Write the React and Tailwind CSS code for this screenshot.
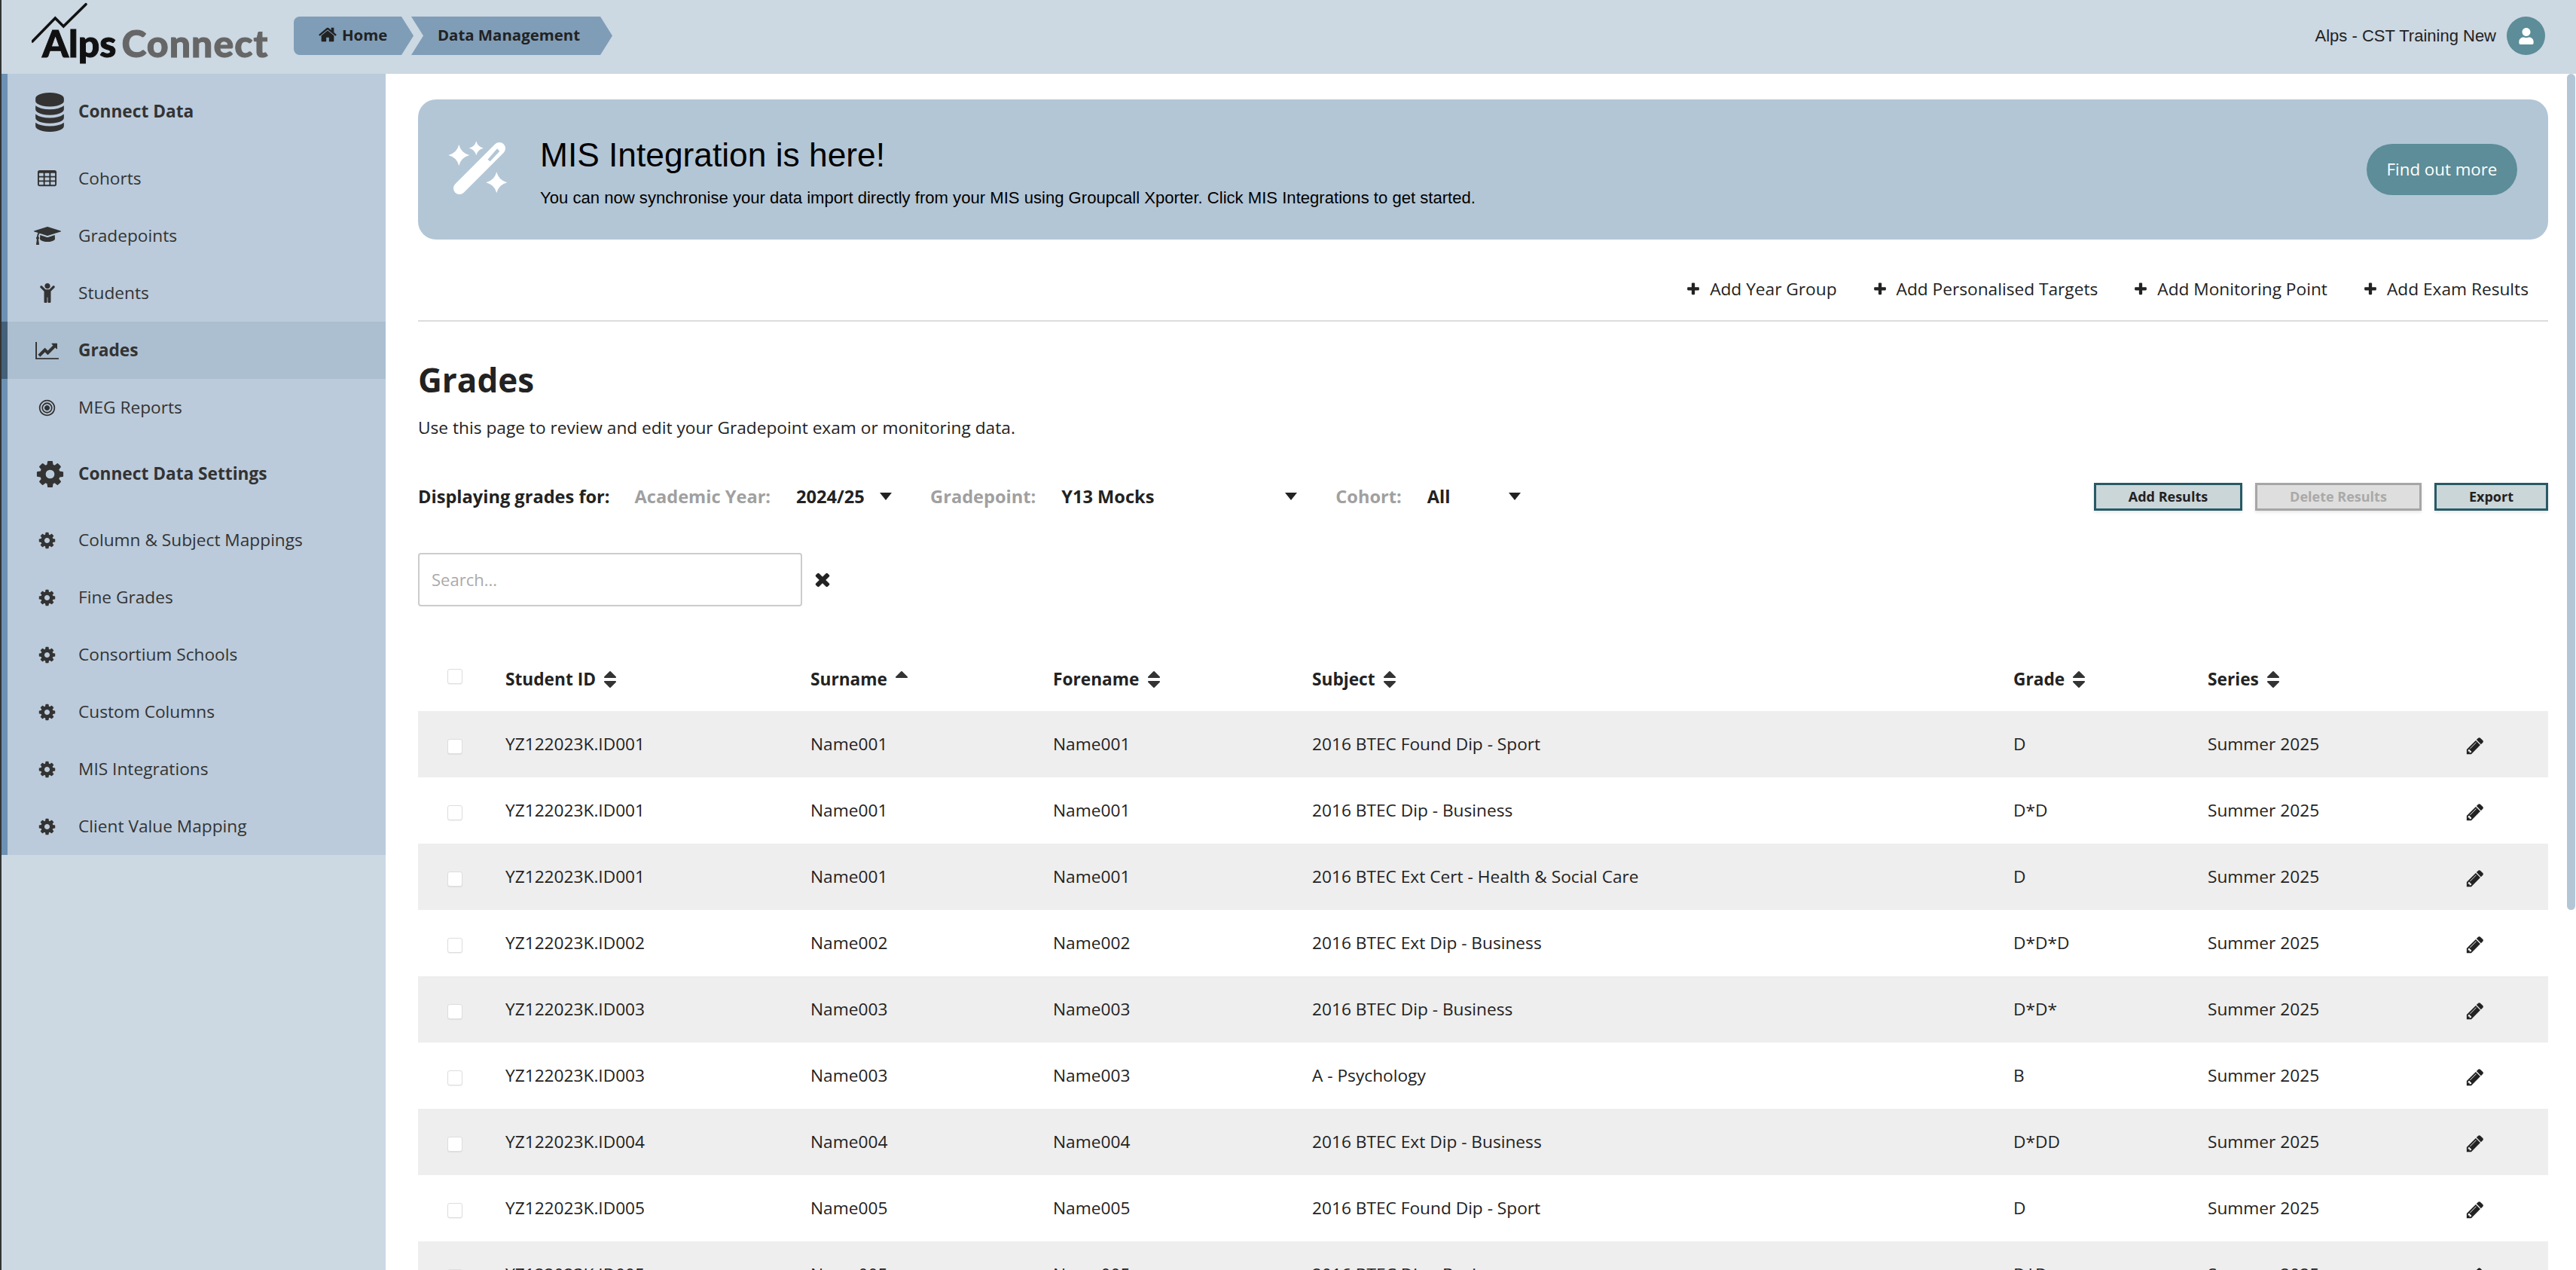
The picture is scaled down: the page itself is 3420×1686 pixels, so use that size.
import React from "react";
import { FaChild, FaUser } from "react-icons/fa";

const P = {
  cog: ["0 0 1792 1792", "M1152 896q0-106-75-181t-181-75-181 75-75 181 75 181 181 75 181-75 75-181zm512-109v222q0 12-8 23t-20 13l-185 28q-19 54-39 91 35 50 107 138 10 12 10 25t-9 23q-27 37-99 108t-94 71q-12 0-26-9l-138-108q-44 23-91 38-16 136-29 186-7 28-36 28h-222q-14 0-24.5-8.5t-11.5-21.5l-28-184q-49-16-90-37l-141 107q-10 9-25 9-14 0-25-11-126-114-165-168-7-10-7-23 0-12 8-23 15-21 51-66.5t54-70.5q-27-50-41-99l-183-27q-13-2-21-12.5t-8-23.5v-222q0-12 8-23t19-13l186-28q14-46 39-92-40-57-107-138-10-12-10-24 0-10 9-23 26-36 98.5-107.5t94.5-71.5q13 0 26 10l138 107q44-23 91-38 16-136 29-186 7-28 36-28h222q14 0 24.5 8.5t11.5 21.5l28 184q49 16 90 37l142-107q9-9 24-9 13 0 25 10 129 119 165 170 7 8 7 22 0 12-8 23-15 21-51 66.5t-54 70.5q26 50 41 98l183 28q13 2 21 12.5t8 23.5z"],
  pencil: ["0 0 1792 1792", "M491 1536l91-91-235-235-91 91v107h128v128h107zm523-928q0-22-22-22-10 0-17 7l-542 542q-7 7-7 17 0 22 22 22 10 0 17-7l542-542q7-7 7-17zm-54-192l416 416-832 832h-416v-416zm683 96q0 53-37 90l-166 166-416-416 166-165q36-38 90-38 53 0 91 38l235 234q37 39 37 91z"],
  home: ["0 0 1792 1792", "M1472 992v480q0 26-19 45t-45 19h-384v-384h-256v384h-384q-26 0-45-19t-19-45v-480q0-1 .5-3t.5-3l575-474 575 474q1 2 1 6zm223-69l-62 74q-8 9-21 11h-3q-13 0-21-7l-692-577-692 577q-12 8-24 7-13-2-21-11l-62-74q-8-10-7-23.5t11-21.5l719-599q32-26 76-26t76 26l244 204v-195q0-14 9-23t23-9h192q14 0 23 9t9 23v408l219 182q10 8 11 21.5t-7 23.5z"],
  database: ["0 0 1792 1792", "M896 768q237 0 443-43t325-127v170q0 69-103 128t-280 93.5-385 34.5-385-34.5-280-93.5-103-128v-170q119 84 325 127t443 43zm0 768q237 0 443-43t325-127v170q0 69-103 128t-280 93.5-385 34.5-385-34.5-280-93.5-103-128v-170q119 84 325 127t443 43zm0-384q237 0 443-43t325-127v170q0 69-103 128t-280 93.5-385 34.5-385-34.5-280-93.5-103-128v-170q119 84 325 127t443 43zm0-1152q208 0 385 34.5t280 93.5 103 128v128q0 69-103 128t-280 93.5-385 34.5-385-34.5-280-93.5-103-128v-128q0-69 103-128t280-93.5 385-34.5z"],
  plus: ["0 0 1792 1792", "M1600 736v192q0 40-28 68t-68 28h-416v416q0 40-28 68t-68 28h-192q-40 0-68-28t-28-68v-416h-416q-40 0-68-28t-28-68v-192q0-40 28-68t68-28h416v-416q0-40 28-68t68-28h192q40 0 68 28t28 68v416h416q40 0 68 28t28 68z"],
  times: ["0 0 1792 1792", "M1490 1322q0 40-28 68l-136 136q-28 28-68 28t-68-28l-294-294-294 294q-28 28-68 28t-68-28l-136-136q-28-28-28-68t28-68l294-294-294-294q-28-28-28-68t28-68l136-136q28-28 68-28t68 28l294 294 294-294q28-28 68-28t68 28l136 136q28 28 28 68t-28 68l-294 294 294 294q28 28 28 68z"],
  sort: ["0 0 1792 1792", "M1408 1088q0 26-19 45l-448 448q-19 19-45 19t-45-19l-448-448q-19-19-19-45t19-45 45-19h896q26 0 45 19t19 45zm0-384q0 26-19 45t-45 19h-896q-26 0-45-19t-19-45 19-45l448-448q19-19 45-19t45 19l448 448q19 19 19 45z"],
  sortUp: ["0 0 1792 1792", "M1408 704q0 26-19 45t-45 19h-896q-26 0-45-19t-19-45 19-45l448-448q19-19 45-19t45 19l448 448q19 19 19 45z"],
  table: ["0 0 1792 1792", "M576 1376v-192q0-14-9-23t-23-9h-320q-14 0-23 9t-9 23v192q0 14 9 23t23 9h320q14 0 23-9t9-23zm0-384v-192q0-14-9-23t-23-9h-320q-14 0-23 9t-9 23v192q0 14 9 23t23 9h320q14 0 23-9t9-23zm512 384v-192q0-14-9-23t-23-9h-320q-14 0-23 9t-9 23v192q0 14 9 23t23 9h320q14 0 23-9t9-23zm-512-768v-192q0-14-9-23t-23-9h-320q-14 0-23 9t-9 23v192q0 14 9 23t23 9h320q14 0 23-9t9-23zm512 384v-192q0-14-9-23t-23-9h-320q-14 0-23 9t-9 23v192q0 14 9 23t23 9h320q14 0 23-9t9-23zm512 384v-192q0-14-9-23t-23-9h-320q-14 0-23 9t-9 23v192q0 14 9 23t23 9h320q14 0 23-9t9-23zm-512-768v-192q0-14-9-23t-23-9h-320q-14 0-23 9t-9 23v192q0 14 9 23t23 9h320q14 0 23-9t9-23zm512 384v-192q0-14-9-23t-23-9h-320q-14 0-23 9t-9 23v192q0 14 9 23t23 9h320q14 0 23-9t9-23zm0-384v-192q0-14-9-23t-23-9h-320q-14 0-23 9t-9 23v192q0 14 9 23t23 9h320q14 0 23-9t9-23zm128-320v1088q0 66-47 113t-113 47h-1344q-66 0-113-47t-47-113v-1088q0-66 47-113t113-47h1344q66 0 113 47t47 113z"],
  cap: ["0 0 2304 1792", "M1774 836l18 316q4 69-82 128t-235 93.5-323 34.5-323-34.5-235-93.5-82-128l18-316 574 181q22 7 48 7t48-7zm530-324q0 23-22 31l-1120 352q-4 1-10 1t-10-1l-652-206q-43 34-71 111.5t-34 178.5q63 36 63 109 0 69-58 107l58 433q2 14-8 25-9 11-24 11h-192q-15 0-24-11-10-11-8-25l58-433q-58-38-58-107 0-73 65-111 11-207 98-330l-333-104q-22-8-22-31t22-31l1120-352q4-1 10-1t10 1l1120 352q22 8 22 31z"],
  chart: ["0 0 2048 1792", "M2048 1536v128h-2048v-1536h128v1408h1920zm-128-1248v435q0 21-19.5 29.5t-35.5-7.5l-121-121-633 633q-10 10-23 10t-23-10l-233-233-416 416-192-192 585-585q10-10 23-10t23 10l233 233 464-464-121-121q-16-16-7.5-35.5t29.5-19.5h435q14 0 23 9t9 23z"],
  bullseye: ["0 0 1792 1792", "M1152 896q0 106-75 181t-181 75-181-75-75-181 75-181 181-75 181 75 75 181zm128 0q0-159-112.5-271.5t-271.5-112.5-271.5 112.5-112.5 271.5 112.5 271.5 271.5 112.5 271.5-112.5 112.5-271.5zm128 0q0 212-150 362t-362 150-362-150-150-362 150-362 362-150 362 150 150 362zm128 0q0-130-51-248.5t-136.5-204-204-136.5-248.5-51-248.5 51-204 136.5-136.5 204-51 248.5 51 248.5 136.5 204 204 136.5 248.5 51 248.5-51 204-136.5 136.5-204 51-248.5zm128 0q0 209-103 385.5t-279.5 279.5-385.5 103-385.5-103-279.5-279.5-103-385.5 103-385.5 279.5-279.5 385.5-103 385.5 103 279.5 279.5 103 385.5z"],
};

function Ic({ n, className, stretch }) {
  const [vb, d] = P[n];
  return (
    <svg viewBox={vb} fill="currentColor" className={className} preserveAspectRatio={stretch ? "none" : undefined}>
      <path d={d} />
    </svg>
  );
}

function star(cx, cy, r) {
  const k = 0.2 * r;
  return `M${cx} ${cy - r}Q${cx + k} ${cy - k} ${cx + r} ${cy}Q${cx + k} ${cy + k} ${cx} ${cy + r}Q${cx - k} ${cy + k} ${cx - r} ${cy}Q${cx - k} ${cy - k} ${cx} ${cy - r}Z`;
}

const OPEN = "font-['Open_Sans',sans-serif]";
const LIB = "font-['Liberation_Sans',Arial,sans-serif]";

const dataItems = [
  ["table", "Cohorts"],
  ["cap", "Gradepoints"],
  ["child", "Students"],
  ["chart", "Grades"],
  ["bullseye", "MEG Reports"],
];
const settingsItems = ["Column & Subject Mappings", "Fine Grades", "Consortium Schools", "Custom Columns", "MIS Integrations", "Client Value Mapping"];

const rows = [
  ["YZ122023K.ID001", "Name001", "Name001", "2016 BTEC Found Dip - Sport", "D"],
  ["YZ122023K.ID001", "Name001", "Name001", "2016 BTEC Dip - Business", "D*D"],
  ["YZ122023K.ID001", "Name001", "Name001", "2016 BTEC Ext Cert - Health & Social Care", "D"],
  ["YZ122023K.ID002", "Name002", "Name002", "2016 BTEC Ext Dip - Business", "D*D*D"],
  ["YZ122023K.ID003", "Name003", "Name003", "2016 BTEC Dip - Business", "D*D*"],
  ["YZ122023K.ID003", "Name003", "Name003", "A - Psychology", "B"],
  ["YZ122023K.ID004", "Name004", "Name004", "2016 BTEC Ext Dip - Business", "D*DD"],
  ["YZ122023K.ID005", "Name005", "Name005", "2016 BTEC Found Dip - Sport", "D"],
  ["YZ122023K.ID005", "Name005", "Name005", "2016 BTEC Dip - Business", "D*D"],
];

function SideIcon({ n }) {
  if (n === "child") return <FaChild className="w-[20px] h-[26px]" />;
  if (n === "chart") return <Ic n="chart" className="w-[31px] h-[27px]" />;
  if (n === "cap") return <Ic n="cap" className="w-[36px] h-[28px]" />;
  if (n === "table") return <Ic n="table" className="w-[27px] h-[27px]" />;
  return <Ic n={n} className="w-[25px] h-[25px]" />;
}

function SideRow({ icon, label, active }) {
  return (
    <div className={`h-[76px] flex items-center border-l-[8px] ${active ? "bg-[#acbfd1] border-[#45617a] font-bold" : "border-[#6d91b3]"}`}>
      <div className="w-[94px] pl-[23px] pr-[12px] flex justify-center shrink-0 text-[#333333]">{icon}</div>
      <span>{label}</span>
    </div>
  );
}

function Head({ label, sort = "sort", w }) {
  return (
    <div className={`${w} flex items-center gap-[5px]`}>
      <span>{label}</span>
      <Ic n={sort} className="w-[28px] h-[28px] text-[#333333]" />
    </div>
  );
}

function Filter({ label, value, w }) {
  return (
    <div className="flex items-center">
      <span className="text-[#a0a0a0] mr-[34px]">{label}</span>
      <div className={`${w} flex items-center justify-between`}>
        <span className="text-[#222222]">{value}</span>
        <span className="w-0 h-0 border-x-[8px] border-x-transparent border-t-[10px] border-t-[#222222]" />
      </div>
    </div>
  );
}

function Check() {
  return <span className="block w-[20px] h-[20px] rounded-[3px] bg-white border border-[#dddddd] shadow-[0_1px_1px_rgba(0,0,0,0.06)]" />;
}

export default function App() {
  return (
    <div className={`h-[1686px] w-[3420px] overflow-hidden flex flex-col bg-[#ccd8e2] ${OPEN} text-[#222222]`}>
      <header className="h-[98px] shrink-0 flex items-start justify-between border-l-2 border-[#333333] bg-[#ccd8e2]">
        <div className="flex items-start">
          <div className="relative w-[348px] h-[98px] ml-[40px]">
            <svg viewBox="0 0 80 60" fill="none" className="absolute left-0 top-[2px] w-[80px] h-[60px]">
              <path d="M1 53 L31.300 22 L42.300 33 L72 3.700" stroke="#111111" strokeWidth="3.500" strokeLinecap="round" />
            </svg>
            <div className="absolute left-[14px] top-[27px] flex items-baseline font-['Lato',sans-serif] font-black text-[50px] leading-[60px] whitespace-nowrap [-webkit-text-stroke:1px_currentColor]">
              <span className="text-[#111111]">Alps</span>
              <span className="text-[#666666] ml-[7px] tracking-[1px]">Connect</span>
            </div>
          </div>
          <nav className="flex items-center mt-[22px] h-[51px] text-[20.4px] font-bold text-[#222222]">
            <div className="h-[51px] w-[159px] bg-[#7f9db7] rounded-l-[8px] flex items-center pb-[3px] pl-[32px] gap-[6px] [clip-path:polygon(0_0,143px_0,159px_50%,143px_100%,0_100%)]">
              <Ic n="home" className="w-[26px] h-[26px] text-[#222222]" />
              <span>Home</span>
            </div>
            <div className="h-[51px] w-[267px] -ml-[3px] bg-[#7f9db7] flex items-center pb-[3px] pl-[35px] [clip-path:polygon(0_0,251px_0,267px_50%,251px_100%,0_100%,16px_50%)]">
              Data Management
            </div>
          </nav>
        </div>
        <div className="flex items-center mt-[22px] pr-[41px] gap-[14px]">
          <span className={`${LIB} text-[22px] text-[#222222]`}>Alps - CST Training New</span>
          <div className="w-[51px] h-[51px] rounded-full bg-[#5c8d98] flex items-center justify-center text-white">
            <FaUser className="w-[22px] h-[22px]" />
          </div>
        </div>
      </header>

      <div className="flex-1 flex min-h-0">
        <aside className="w-[512px] shrink-0 border-l-2 border-[#333333] bg-[#ccd8e2] text-[22.7px] text-[#333333]">
          <div className="bg-[#bbcbdb] h-[1037px]">
            <div className="h-[101px] flex items-center border-l-[8px] border-[#6d91b3] font-bold">
              <div className="w-[94px] pl-[30px] pr-[12px] flex justify-center shrink-0"><Ic n="database" stretch className="w-[44px] h-[52px]" /></div>
              <span>Connect Data</span>
            </div>
            {dataItems.map(([n, l]) => (
              <SideRow key={l} icon={<SideIcon n={n} />} label={l} active={l === "Grades"} />
            ))}
            <div className="h-[100px] flex items-center border-l-[8px] border-[#6d91b3] font-bold">
              <div className="w-[94px] pl-[30px] pr-[12px] flex justify-center shrink-0"><Ic n="cog" className="w-[41px] h-[41px]" /></div>
              <span>Connect Data Settings</span>
            </div>
            {settingsItems.map((l) => (
              <SideRow key={l} icon={<Ic n="cog" className="w-[25px] h-[25px]" />} label={l} />
            ))}
          </div>
        </aside>

        <main className="flex-1 min-w-0 flex bg-white">
          <div className="w-[2896px] pl-[43px] pr-[25px] shrink-0">
            <section className="mt-[34px] h-[186px] rounded-[24px] bg-[#b3c6d6] flex items-center justify-between pl-[40px] pr-[41px]">
              <div className="flex items-center">
                <svg viewBox="15 17 80 76" fill="#ffffff" className="w-[80px] h-[76px]">
                  <path d="M83 27 L30 80" stroke="#ffffff" strokeWidth="16" strokeLinecap="round" />
                  <path d="M67.500 41.700 L80 27.300 L83.300 30.700 L70.700 44.300 Z" fill="#b3c6d6" />
                  <path d={star(29.3, 36, 14)} />
                  <path d={star(52.3, 26.7, 9.5)} />
                  <path d={star(79.3, 72.3, 14)} />
                </svg>
                <div className={`${LIB} ml-[42px] mt-[5px] text-black`}>
                  <div className="text-[44.3px] leading-[54px]">MIS Integration is here!</div>
                  <div className="text-[22.1px] leading-[28px] mt-[16px]">You can now synchronise your data import directly from your MIS using Groupcall Xporter. Click MIS Integrations to get started.</div>
                </div>
              </div>
              <div className="w-[200px] h-[68px] rounded-full bg-[#5c8d98] text-white text-[22.3px] flex items-center justify-center">Find out more</div>
            </section>

            <div className="h-[109px] border-b-[2px] border-[#dddddd] flex items-end justify-end pb-[23px] pr-[26px] gap-[47px] text-[22.7px] text-[#222222]">
              {["Add Year Group", "Add Personalised Targets", "Add Monitoring Point", "Add Exam Results"].map((t) => (
                <div key={t} className="flex items-center gap-[12px] leading-[36px]">
                  <Ic n="plus" className="w-[20px] h-[20px]" />
                  <span>{t}</span>
                </div>
              ))}
            </div>

            <h1 className="mt-[49px] text-[44px] leading-[56px] font-bold text-[#222222]">Grades</h1>
            <p className="mt-[20px] text-[22.7px] leading-[32px] text-[#222222]">Use this page to review and edit your Gradepoint exam or monitoring data.</p>

            <div className="mt-[57px] h-[37px] flex items-center justify-between text-[23.6px] font-bold">
              <div className="flex items-center">
                <span className="mr-[33px] text-[#222222]">Displaying grades for:</span>
                <div className="flex items-center gap-[51px]">
                  <Filter label="Academic Year:" value="2024/25" w="w-[127px]" />
                  <Filter label="Gradepoint:" value="Y13 Mocks" w="w-[313px]" />
                  <Filter label="Cohort:" value="All" w="w-[124px]" />
                </div>
              </div>
              <div className="flex items-center gap-[17px] text-[18px]">
                <div className="w-[197px] h-[37px] border-[3px] border-[#265a66] bg-[#cbd6d9] flex items-center justify-center shadow-[0_2px_4px_rgba(0,0,0,0.1)]">Add Results</div>
                <div className="w-[221px] h-[37px] border-[3px] border-[#a6a6a6] bg-[#dedede] text-[#a9a9a9] flex items-center justify-center shadow-[0_2px_4px_rgba(0,0,0,0.1)]">Delete Results</div>
                <div className="w-[151px] h-[37px] border-[3px] border-[#265a66] bg-[#cbd6d9] flex items-center justify-center shadow-[0_2px_4px_rgba(0,0,0,0.1)]">Export</div>
              </div>
            </div>

            <div className="mt-[56px] flex items-center">
              <div className="w-[510px] h-[71px] border-2 border-[#cccccc] rounded-[4px] pl-[16px] flex items-center text-[22px] text-[#aaaaaa]">Search...</div>
              <Ic n="times" className="ml-[13px] w-[28px] h-[28px] text-[#222222] -mt-[2px]" />
            </div>

            <div className="mt-[59px] h-[80px] pb-[4px] flex items-center text-[22.7px] font-bold text-[#222222]">
              <div className="w-[116px] pl-[39px] -mt-[8px] shrink-0"><Check /></div>
              <Head label="Student ID" w="w-[405px]" />
              <Head label="Surname" sort="sortUp" w="w-[322px]" />
              <Head label="Forename" w="w-[344px]" />
              <Head label="Subject" w="w-[931px]" />
              <Head label="Grade" w="w-[258px]" />
              <Head label="Series" w="w-[300px]" />
            </div>

            {rows.map((r, i) => (
              <div key={i} className={`h-[88px] flex items-center text-[22.7px] text-[#222222] ${i % 2 === 0 ? "bg-[#eeeeee]" : "bg-white"}`}>
                <div className="w-[116px] pl-[39px] shrink-0 pt-[6px]"><Check /></div>
                <div className="w-[405px]">{r[0]}</div>
                <div className="w-[322px]">{r[1]}</div>
                <div className="w-[344px]">{r[2]}</div>
                <div className="w-[931px]">{r[3]}</div>
                <div className="w-[258px]">{r[4]}</div>
                <div className="w-[342px]">Summer 2025</div>
                <Ic n="pencil" className="mt-[4px] w-[26px] h-[26px] text-[#222222]" />
              </div>
            ))}
          </div>
          <div className="flex-1 flex justify-end">
            <div className="w-[11px] mr-[1px] h-[1110px] rounded-[6px] bg-[#b3c6d6]" />
          </div>
        </main>
      </div>
    </div>
  );
}
